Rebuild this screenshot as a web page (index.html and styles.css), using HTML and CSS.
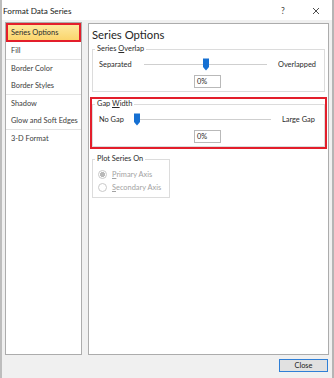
FILE: index.html
```html
<!DOCTYPE html>
<html lang="en">
<head>
<meta charset="UTF-8">
<meta name="viewport" content="width=device-width, initial-scale=1.0">
<title>Format Data Series</title>
<link rel="stylesheet" href="styles.css">
</head>
<body>
<div class="window">
    <div class="titlebar">
        <span class="title">Format Data Series</span>
        <span class="help">?</span>
        <span class="close-x">
            <svg width="8" height="8" viewBox="0 0 8 8"><path d="M1 1 L7 7 M7 1 L1 7" stroke="#3a3a3a" stroke-width="0.9" fill="none"/></svg>
        </span>
    </div>

    <div class="panes">
        <ul class="nav">
            <li class="active">Series Options</li>
            <li class="end">Fill</li>
            <li>Border Color</li>
            <li class="end">Border Styles</li>
            <li>Shadow</li>
            <li class="end">Glow and Soft Edges</li>
            <li>3-D Format</li>
        </ul>

        <div class="content">
            <h2>Series Options</h2>

            <fieldset class="group">
                <legend>Series <u>O</u>verlap</legend>
                <div class="slider-row overlap">
                    <span class="lbl-left">Separated</span>
                    <div class="track">
                        <span class="thumb" style="left: calc(50% - 3px)">
                            <svg width="6" height="13" viewBox="0 0 6 13"><path d="M0 0.5 H6 V9 L3 12.5 L0 9 Z" fill="#1670d2"/></svg>
                        </span>
                    </div>
                    <span class="lbl-right">Overlapped</span>
                </div>
                <div class="value">0%</div>
            </fieldset>

            <fieldset class="group highlight">
                <legend>Gap <u>W</u>idth</legend>
                <div class="slider-row gap">
                    <span class="lbl-left">No Gap</span>
                    <div class="track">
                        <span class="thumb" style="left: 0">
                            <svg width="6" height="13" viewBox="0 0 6 13"><path d="M0 0.5 H6 V9 L3 12.5 L0 9 Z" fill="#1670d2"/></svg>
                        </span>
                    </div>
                    <span class="lbl-right">Large Gap</span>
                </div>
                <div class="value">0%</div>
            </fieldset>

            <fieldset class="group plot">
                <legend>Plot Series On</legend>
                <div class="radio-row">
                    <span class="radio checked"></span>
                    <span><u>P</u>rimary Axis</span>
                </div>
                <div class="radio-row">
                    <span class="radio"></span>
                    <span><u>S</u>econdary Axis</span>
                </div>
            </fieldset>
        </div>
    </div>

    <div class="footer">
        <button class="btn">Close</button>
    </div>
</div>
</body>
</html>
```

FILE: styles.css
```css
body {
    margin: 0;
    font-family: Lato, "Noto Sans", sans-serif;
    font-size: 7.4px;
    color: #2a2a2a;
    background: #fff;
}

.window {
    width: 334px;
    height: 378px;
    box-sizing: border-box;
    display: flex;
    flex-direction: column;
    background-color: #f0f0f0;
    border-left: 2px solid #bdbdbd;
    border-right: 2px solid #b5b5b5;
}

/* title bar */
.titlebar {
    height: 20px;
    display: flex;
    align-items: center;
    padding-left: 1px;
    padding-top: 1px;
    box-sizing: border-box;
    background-color: #fff;
}
.title {
    flex: 1;
    font-size: 8.2px;
    color: #1a1a1a;
}
.help {
    width: 4px;
    margin-right: 27px;
    font-size: 8.5px;
    color: #444;
}
.close-x {
    width: 8px;
    height: 8px;
    margin-right: 12px;
    display: flex;
}

/* two panes */
.panes {
    flex: 1;
    display: flex;
    gap: 6px;
    padding: 2px 3px 0 3px;
    min-height: 0;
}

.nav {
    width: 77px;
    box-sizing: border-box;
    margin: 0;
    padding: 0;
    list-style: none;
    background-color: #fff;
    border: 1px solid #acacac;
    color: #3c3c3c;
}
.nav li {
    height: 17px;
    line-height: 17px;
    padding-left: 5px;
    white-space: nowrap;
}
.nav li.end {
    border-bottom: 1px solid #e3e3e3;
}
.nav li.active {
    height: 15px;
    line-height: 15px;
    padding-left: 3px;
    border: 2px solid #e31e2b;
    background: linear-gradient(#fde9a0, #fbd56c);
    color: #2a2a2a;
}

.content {
    flex: 1;
    margin-top: 1px;
    padding: 0 3px;
    background-color: #fff;
    border: 1px solid #acacac;
}
.content h2 {
    margin: 0;
    height: 20px;
    line-height: 22px;
    font-size: 11.3px;
    font-weight: normal;
    color: #262626;
}

/* group boxes */
.group {
    margin: 0;
    padding: 0 4px 3px 2px;
    border: 1px solid #dcdcdc;
    min-width: 0;
}
.group + .group {
    margin-top: 7px;
}
.group legend {
    padding: 0 2px;
    line-height: 10px;
    color: #2a2a2a;
}
.highlight {
    outline: 2px solid #e31e2b;
}

.slider-row {
    display: flex;
    align-items: center;
    height: 13px;
    margin-top: 4px;
}
.lbl-left,
.lbl-right {
    box-sizing: border-box;
    white-space: nowrap;
}
.lbl-left {
    padding-left: 4px;
}
.lbl-right {
    padding-left: 11px;
}
.overlap .lbl-left { width: 49px; }
.overlap .lbl-right { width: 53px; }
.gap .lbl-left { width: 39px; }
.gap .lbl-right { width: 49px; }

.track {
    flex: 1;
    height: 13px;
    position: relative;
}
.track::before {
    content: "";
    position: absolute;
    left: 0;
    right: 0;
    top: 6px;
    border-top: 1px solid #cfcfcf;
}
.thumb {
    position: absolute;
    top: 0;
    width: 6px;
    height: 13px;
    display: flex;
}

.value {
    width: 27px;
    height: 13px;
    box-sizing: border-box;
    margin: 4px auto 0;
    padding-left: 2px;
    line-height: 11px;
    border: 1px solid #b9b9b9;
    background-color: #fff;
}

/* plot series on */
.plot {
    width: 78px;
    box-sizing: border-box;
}
.radio-row {
    display: flex;
    align-items: center;
    height: 13px;
    color: #a3a3a3;
    white-space: nowrap;
}
.radio-row:first-of-type {
    margin-top: 4px;
}
.radio {
    width: 9px;
    height: 9px;
    box-sizing: border-box;
    margin: 0 5px 0 3px;
    border: 1px solid #c9c9c9;
    border-radius: 50%;
    background-color: #fff;
}
.radio.checked {
    background: radial-gradient(circle, #b9b9b9 0 2.3px, #fff 2.6px);
}

/* footer */
.footer {
    height: 23px;
    box-sizing: border-box;
    display: flex;
    justify-content: flex-end;
    align-items: flex-start;
    padding: 4px 4px 0 0;
}
.btn {
    width: 49px;
    height: 13px;
    padding: 0;
    font-family: inherit;
    font-size: 7.4px;
    color: #222;
    background-color: #e1e1e1;
    border: 1px solid #2f7fd6;
    border-radius: 0;
}
```
